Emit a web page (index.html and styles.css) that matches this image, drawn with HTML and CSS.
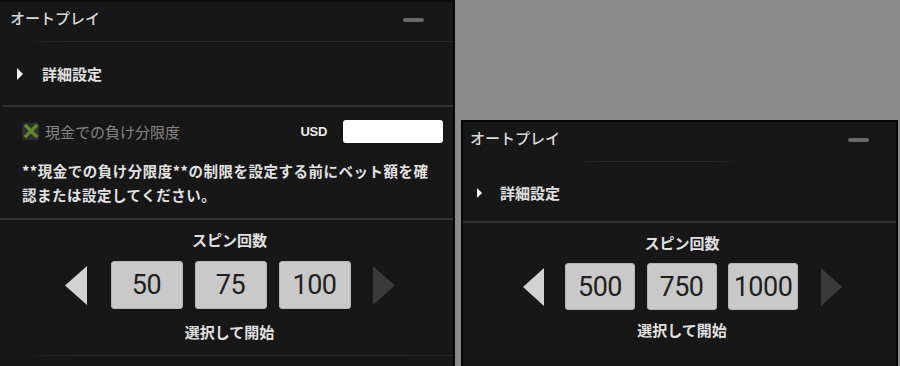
FILE: index.html
```html
<!DOCTYPE html>
<html lang="ja">
<head>
<meta charset="utf-8">
<title>オートプレイ</title>
<link rel="stylesheet" href="styles.css">
</head>
<body>
<div class="stage">
  <section class="panel panel-large">
    <header class="panel-head">
      <span class="panel-title">オートプレイ</span>
      <span class="minimize"></span>
    </header>
    <div class="sep sep-faint"></div>
    <div class="advanced">
      <span class="caret"></span>
      <span class="advanced-label">詳細設定</span>
    </div>
    <div class="sep sep-solid sep-inset"></div>
    <div class="limit">
      <div class="limit-row">
        <span class="checkbox">
          <svg width="14" height="14" viewBox="0 0 14 14"><path d="M2 2 L12 12 M12 2 L2 12" stroke="#5f8a2c" stroke-width="3.2" stroke-linecap="square"/></svg>
        </span>
        <span class="limit-label">現金での負け分限度</span>
        <span class="currency">USD</span>
        <span class="amount"></span>
      </div>
      <p class="note">**現金での負け分限度**の制限を設定する前にベット額を確<br>認または設定してください。</p>
    </div>
    <div class="sep sep-solid"></div>
    <div class="spins">
      <div class="spins-title">スピン回数</div>
      <div class="spins-row">
        <svg class="arrow" width="22" height="39" viewBox="0 0 22 39"><path d="M0 19.5 L22 0 L22 39 Z" fill="#d2d2d2"/></svg>
        <span class="count">50</span>
        <span class="count">75</span>
        <span class="count">100</span>
        <svg class="arrow" width="22" height="39" viewBox="0 0 22 39"><path d="M22 19.5 L0 0 L0 39 Z" fill="#3a3a3a"/></svg>
      </div>
      <div class="spins-foot">選択して開始</div>
    </div>
    <div class="sep sep-faint"></div>
  </section>

  <div class="side">
    <section class="panel panel-small">
      <header class="panel-head">
        <span class="panel-title">オートプレイ</span>
        <span class="minimize"></span>
      </header>
      <div class="sep sep-short"></div>
      <div class="advanced">
        <span class="caret"></span>
        <span class="advanced-label">詳細設定</span>
      </div>
      <div class="sep sep-solid"></div>
      <div class="spins">
        <div class="spins-title">スピン回数</div>
        <div class="spins-row">
          <svg class="arrow" width="21" height="38" viewBox="0 0 21 38"><path d="M0 19 L21 0 L21 38 Z" fill="#d2d2d2"/></svg>
          <span class="count">500</span>
          <span class="count">750</span>
          <span class="count">1000</span>
          <svg class="arrow" width="21" height="38" viewBox="0 0 21 38"><path d="M21 19 L0 0 L0 38 Z" fill="#3a3a3a"/></svg>
        </div>
        <div class="spins-foot">選択して開始</div>
      </div>
    </section>
  </div>
</div>
</body>
</html>
```

FILE: styles.css
```css
* { box-sizing: border-box; }

html, body {
  margin: 0;
  padding: 0;
  background: #8a8a8a;
  font-family: "Noto Sans CJK JP", "Noto Sans", sans-serif;
  overflow: hidden;
}

.stage {
  display: flex;
  width: 900px;
  height: 366px;
  overflow: hidden;
}

.panel {
  background: #171717;
  color: #dcdcdc;
  display: flex;
  flex-direction: column;
}

.panel-large {
  width: 455px;
  height: 366px;
  border-top: 2px solid #0c0c0c;
  border-right: 2px solid #050505;
}

.side {
  flex: 1;
  padding: 120px 2px 0 6px;
}

.panel-small {
  width: 437px;
  height: 300px;
  border: 2px solid #050505;
  border-bottom: none;
}

.panel-head {
  display: flex;
  align-items: center;
  justify-content: space-between;
  padding: 5px 29px 12px 10px;
  line-height: 22px;
}

.panel-small .panel-head {
  padding: 5px 27px 12px 7px;
}

.panel-title {
  font-size: 15px;
  font-weight: 500;
  color: #dadada;
}

.minimize {
  width: 21px;
  height: 4px;
  border-radius: 2px;
  background: #686868;
  margin-top: 3px;
}

.sep { flex: none; }

.sep-faint {
  height: 1px;
  margin-left: 22px;
  background: linear-gradient(to right, rgba(48,42,36,0), #2f2a24 12%, #2f2a24 88%, #2a2622);
}

.sep-short {
  height: 1px;
  margin-left: 110px;
  width: 168px;
  background: linear-gradient(to right, rgba(48,42,36,0), #2f2a24 20%, #2f2a24 80%, rgba(48,42,36,0));
}

.sep-solid {
  height: 2px;
  background: #323232;
}

.sep-inset { margin-left: 3px; }

.advanced {
  display: flex;
  align-items: center;
  height: 63px;
  padding-left: 17px;
}

.panel-small .advanced {
  height: 59px;
  padding-left: 14px;
  padding-top: 2px;
}

.caret {
  width: 0;
  height: 0;
  border-top: 6px solid transparent;
  border-bottom: 6px solid transparent;
  border-left: 6px solid #f2f2f2;
  margin-right: 19px;
}

.panel-small .caret {
  border-top-width: 5.5px;
  border-bottom-width: 5.5px;
  border-left-width: 5px;
  margin-right: 18px;
}

.advanced-label {
  font-size: 15px;
  font-weight: bold;
  color: #e0e0e0;
}

.limit {
  padding: 12px 10px 11px 22px;
}

.limit-row {
  display: flex;
  align-items: center;
  height: 24px;
}

.checkbox {
  width: 17px;
  height: 17px;
  background: #2f2f2f;
  border-radius: 2px;
  display: flex;
  align-items: center;
  justify-content: center;
  margin-right: 6px;
}

.limit-label {
  font-size: 15px;
  color: #858585;
  flex: 1;
}

.currency {
  font-family: "Liberation Sans", Arial, sans-serif;
  font-size: 13px;
  font-weight: bold;
  color: #ececec;
  margin-right: 16px;
  letter-spacing: -0.3px;
}

.amount {
  width: 100px;
  height: 23px;
  background: #ffffff;
  border-radius: 3px;
}

.note {
  margin: 16px 0 0 0;
  font-size: 14.5px;
  font-weight: bold;
  line-height: 24px;
  letter-spacing: 0.5px;
  color: #e2e2e2;
  white-space: nowrap;
}

.spins {
  display: flex;
  flex-direction: column;
  align-items: center;
  padding: 10px 0 13px 6px;
}

.panel-small .spins {
  padding: 10px 0 0 5px;
}

.spins-title,
.spins-foot {
  font-size: 15px;
  font-weight: bold;
  line-height: 20px;
  color: #e0e0e0;
}

.spins-row {
  display: flex;
  align-items: center;
  gap: 12px;
  margin-top: 11px;
}

.panel-small .spins-row {
  gap: 11.5px;
  margin-top: 10px;
}

.arrow { flex: none; }
.arrow:first-child { margin-right: 12px; }
.arrow:last-child { margin-left: 10px; }

.panel-small .arrow:first-child { margin-right: 10px; }
.panel-small .arrow:last-child { margin-left: 11px; }

.count {
  width: 72px;
  height: 48px;
  background: #c9c9c9;
  border: 1px solid #b4b4b4;
  border-radius: 3px;
  display: flex;
  align-items: center;
  justify-content: center;
  font-family: Roboto, "Noto Sans", sans-serif;
  font-size: 27px;
  font-weight: 400;
  color: #1f1f1f;
  letter-spacing: -0.5px;
}

.panel-small .count {
  width: 70px;
  height: 47px;
}

.spins-foot {
  margin-top: 13px;
}

.panel-small .spins-foot {
  margin-top: 10px;
}
```
